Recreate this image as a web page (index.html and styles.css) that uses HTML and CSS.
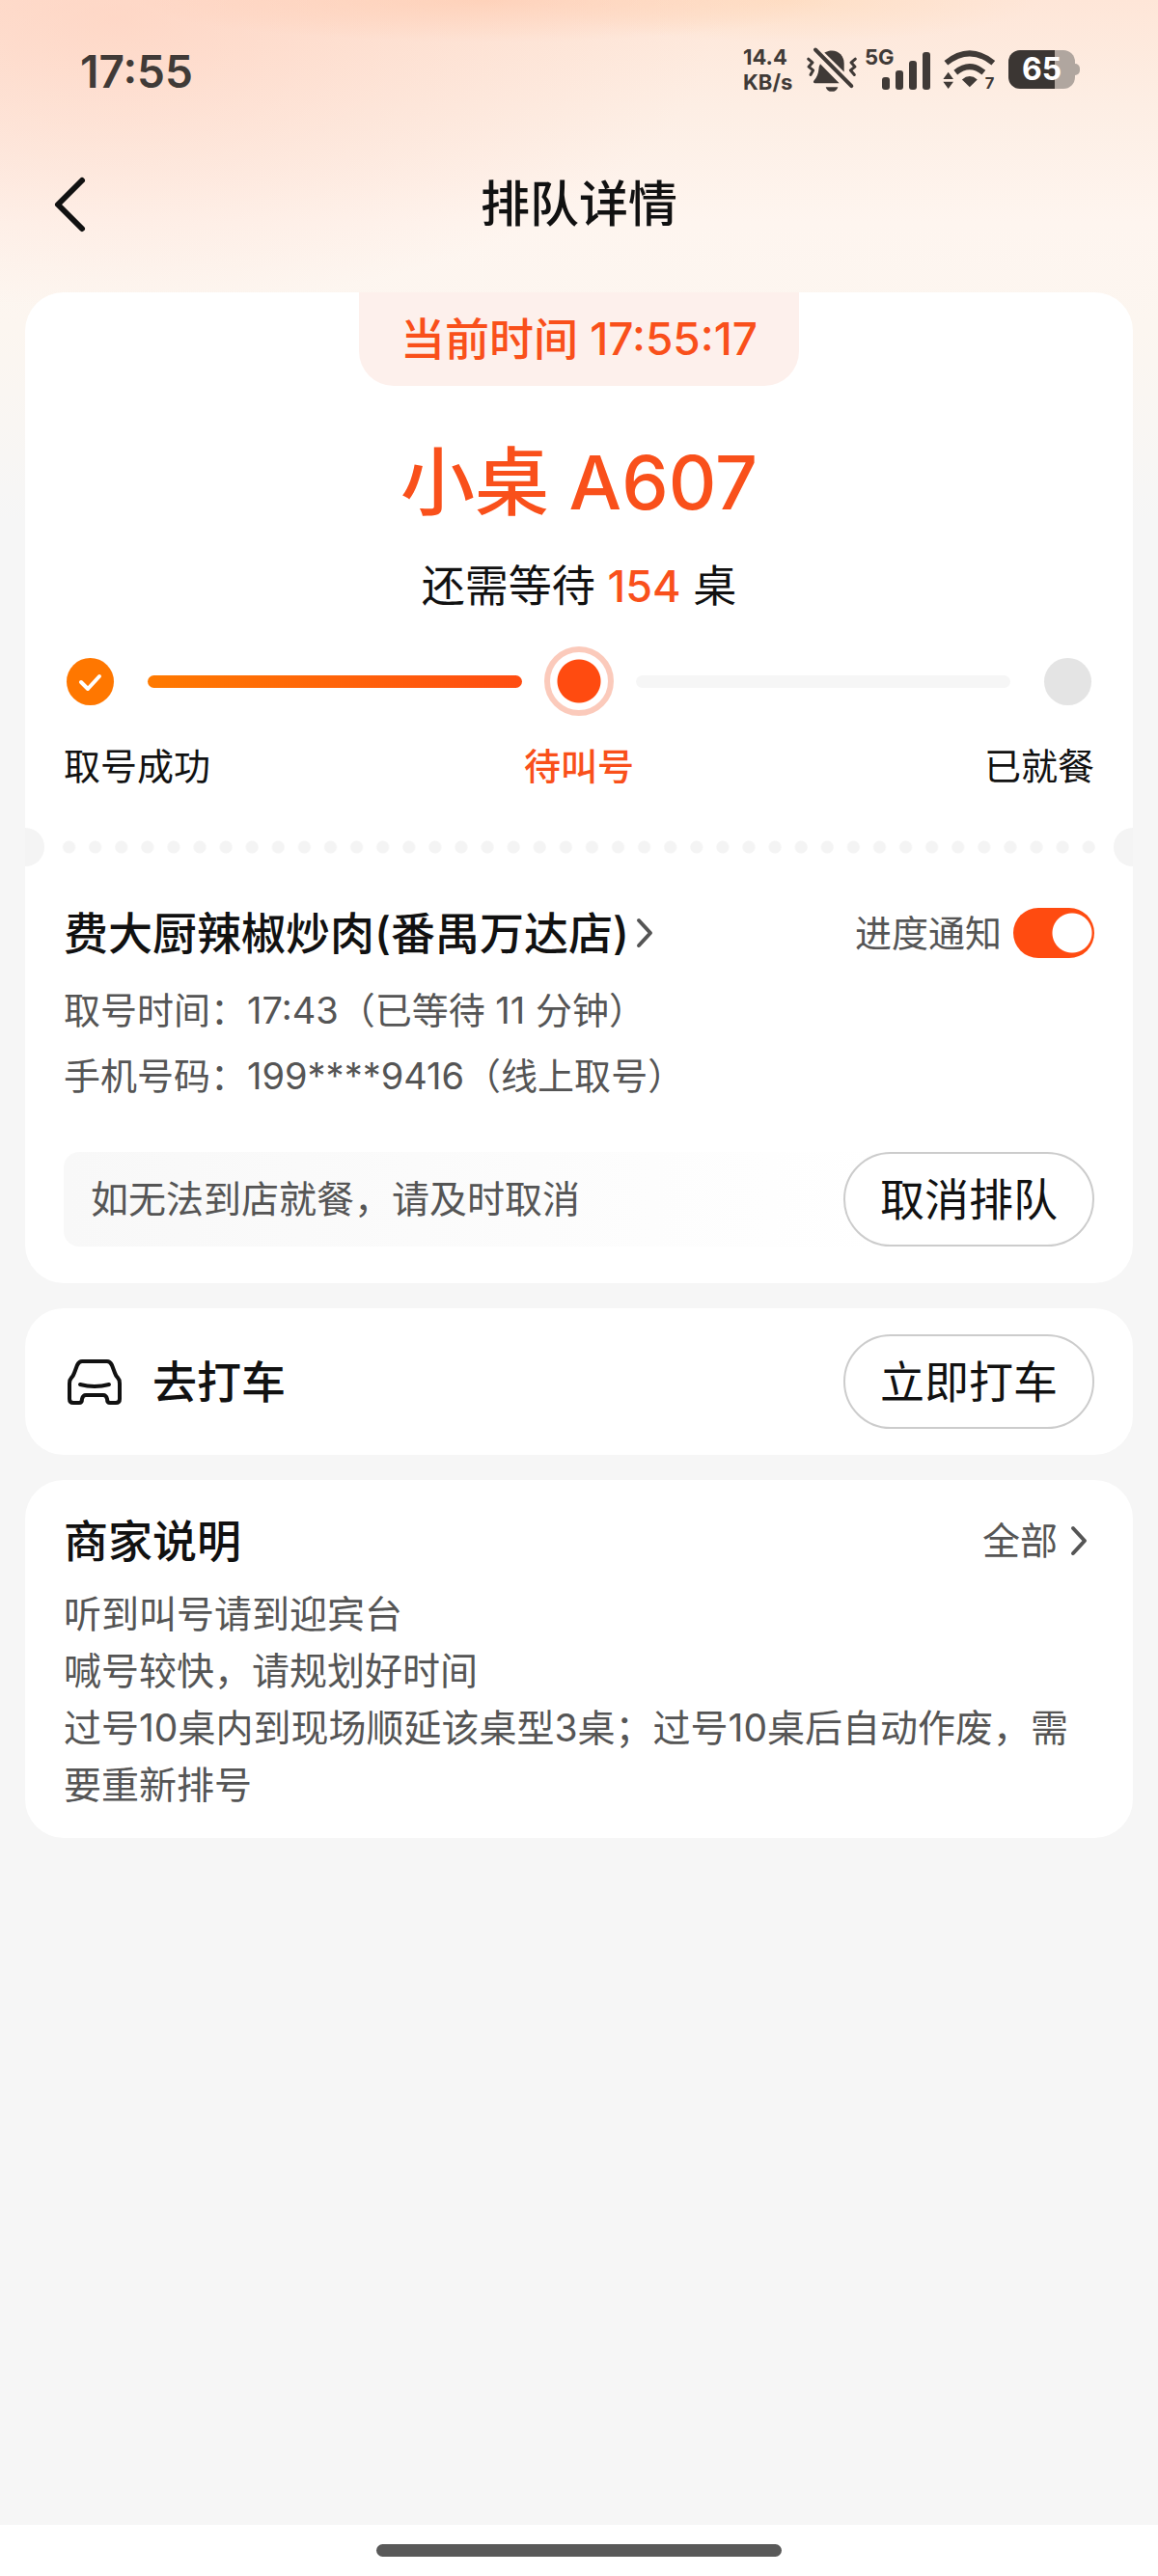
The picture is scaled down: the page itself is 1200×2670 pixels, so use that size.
FILE: index.html
```html
<!DOCTYPE html>
<html lang="zh-CN">
<head>
<meta charset="utf-8">
<meta name="viewport" content="width=device-width, initial-scale=1">
<title>排队详情</title>
<link rel="stylesheet" href="styles.css">
</head>
<body>
<div class="status-bar">
  <time class="clock">17:55</time>
  <div class="status-icons">
    <div class="net-speed"><span>14.4</span><span>KB/s</span></div>
    <svg class="icon-mute" viewBox="285 83 156 140" aria-hidden="true">
      <path class="solid" d="M340 99C372 82 401 102 401 132V159Z"/>
      <path class="solid" d="M327 134L386 194H310Q303 193 307 187Q321 170 322 152Q322 142 327 134Z"/>
      <path class="solid" d="M344 206H382Q378 220 363 220Q348 220 344 206Z"/>
      <path class="line slash" d="M312 90L424 203"/>
      <path class="line buzz" d="M290 119L303 130L291 143L305 154L297 168M436 119L423 130L435 143L421 154L433 168"/>
    </svg>
    <div class="cellular">
      <span class="cell-type">5G</span>
      <svg class="icon-bars" viewBox="0 0 50 40" aria-hidden="true">
        <rect x="0" y="26" width="8" height="13" rx="3"/>
        <rect x="14" y="19" width="8" height="20" rx="3"/>
        <rect x="28" y="9" width="8" height="30" rx="3"/>
        <rect x="42" y="0" width="8" height="39" rx="3"/>
      </svg>
    </div>
    <svg class="icon-wifi" viewBox="706 98 166 124" aria-hidden="true">
      <path class="line arc" d="M716 138Q790 78 864 138M746 168Q790 132 834 168"/>
      <path class="solid" d="M766 190Q790 170 814 190L790 214Z"/>
      <path class="solid" d="M723 167L739 189H707ZM723 219L739 197H707Z"/>
      <text x="838" y="218">7</text>
    </svg>
    <div class="battery">65</div>
  </div>
</div>

<header class="nav-bar">
  <button class="back" type="button" aria-label="返回">
    <svg viewBox="0 0 36 60" aria-hidden="true"><path d="M31 5L6 30L31 55"/></svg>
  </button>
  <h1 class="nav-title">排队详情</h1>
</header>

<main class="content">
  <section class="card ticket">
    <p class="now">当前时间 17:55:17</p>
    <h2 class="ticket-no">小桌 A607</h2>
    <p class="waiting">还需等待 <strong>154</strong> 桌</p>

    <div class="track" aria-hidden="true">
      <span class="dot dot-done"><svg viewBox="0 0 49 49"><path d="M15 25L22 32L34 19"/></svg></span>
      <span class="bar bar-done"></span>
      <span class="ring"></span>
      <span class="bar"></span>
      <span class="dot"></span>
    </div>
    <ol class="steps">
      <li>取号成功</li>
      <li class="current" aria-current="step">待叫号</li>
      <li>已就餐</li>
    </ol>

    <div class="tear"></div>

    <div class="row store">
      <a class="store-link" href="#store">费大厨辣椒炒肉(番禺万达店)<svg class="chevron" viewBox="0 0 20 32" aria-hidden="true"><path d="M4 3L16 16L4 29"/></svg></a>
      <label class="notify">进度通知<input class="switch" type="checkbox" role="switch" checked></label>
    </div>
    <div class="details">
      <p>取号时间：17:43（已等待 11 分钟）</p>
      <p>手机号码：199****9416（线上取号）</p>
    </div>
    <div class="row cancel">
      <p class="tip">如无法到店就餐，请及时取消</p>
      <button class="pill" type="button">取消排队</button>
    </div>
  </section>

  <section class="card row taxi">
    <svg class="icon-car" viewBox="0 0 56 48" aria-hidden="true">
      <path d="M15 3H41Q44 3 46 7L49 15Q50 18 52 20Q54 22 54 26V42Q54 46 50 46H44Q41 46 41 42Q40 38 37 38H19Q16 38 15 42Q15 46 12 46H6Q2 46 2 42V26Q2 22 4 20Q6 18 7 15L10 7Q12 3 15 3Z"/>
      <path d="M13 27Q28 31 43 27"/>
    </svg>
    <h2 class="card-title taxi-title">去打车</h2>
    <button class="pill" type="button">立即打车</button>
  </section>

  <section class="card notice">
    <div class="row">
      <h2 class="card-title">商家说明</h2>
      <a class="all-link" href="#all">全部<svg class="chevron" viewBox="0 0 20 32" aria-hidden="true"><path d="M4 3L16 16L4 29"/></svg></a>
    </div>
    <div class="notice-text">
      <p>听到叫号请到迎宾台</p>
      <p>喊号较快，请规划好时间</p>
      <p>过号10桌内到现场顺延该桌型3桌；过号10桌后自动作废，需要重新排号</p>
    </div>
  </section>
</main>

<footer class="gesture-bar"><span class="handle"></span></footer>
</body>
</html>
```

FILE: styles.css
```css
:root {
  --ink: #111;
  --muted: #555;
  --status: #403a37;
  --accent: #f9501b;
  --page: #f6f6f6;
  --text-xs: 38px;
  --text-s: 39px;
  --text-m: 46px;
}

* {
  box-sizing: border-box;
}

body {
  margin: 0;
  min-height: 100vh;
  display: flex;
  flex-direction: column;
  color: var(--ink);
  font-family: Inter, "Noto Sans CJK SC", sans-serif;
  font-size: var(--text-s);
  line-height: 60px;
  background:
    radial-gradient(ellipse 360px 44px at 42% 0, rgba(255, 196, 164, .5), transparent),
    radial-gradient(ellipse 260px 44px at 68% 0, rgba(255, 216, 180, .5), transparent),
    radial-gradient(ellipse 620px 300px at 10% 20px, rgba(255, 200, 180, .5), transparent),
    linear-gradient(#fee6d8 0, #fdeee4 110px, #fef5ef 230px, #fcf6f0 340px, #f6f6f6 540px) var(--page);
}

h1, h2, p, ol {
  margin: 0;
  padding: 0;
  font-weight: 400;
}

a {
  color: inherit;
  text-decoration: none;
}

button {
  padding: 0;
  color: inherit;
  font: inherit;
}

/* Status bar */

.status-bar {
  height: 148px;
  padding: 0 86px 0 83px;
  display: flex;
  align-items: center;
  justify-content: space-between;
  color: var(--status);
}

.clock {
  font-size: 46px;
  font-weight: 600;
}

.status-icons {
  padding-bottom: 4px;
  display: flex;
  align-items: center;
}

.net-speed {
  width: 66px;
  display: flex;
  flex-direction: column;
  font-size: 22px;
  font-weight: 700;
  line-height: 26px;
}

.status-icons svg {
  display: block;
  overflow: visible;
  fill: var(--status);
}

.status-icons .line {
  fill: none;
  stroke: var(--status);
  stroke-linecap: round;
  stroke-linejoin: round;
}

.icon-mute {
  width: 52px;
  height: 47px;
}

.status-icons .slash {
  stroke-width: 12;
}

.status-icons .buzz {
  stroke-width: 9;
}

.cellular {
  position: relative;
  width: 68px;
  height: 44px;
  margin-left: 8px;
  display: flex;
  align-items: flex-end;
  justify-content: flex-end;
}

.cell-type {
  position: absolute;
  top: 0;
  left: 0;
  font-size: 22px;
  font-weight: 700;
  line-height: 18px;
}

.icon-bars {
  width: 50px;
  height: 40px;
}

.icon-wifi {
  width: 55px;
  height: 41px;
  margin-left: 13px;
}

.status-icons .arc {
  stroke-width: 18;
  stroke-linecap: butt;
}

.icon-wifi text {
  font-size: 50px;
  font-weight: 700;
}

.battery {
  position: relative;
  width: 69px;
  height: 40px;
  margin-left: 13px;
  border-radius: 12px;
  background: linear-gradient(90deg, #3b3633 70%, #b0a69f 70%);
  color: #fff;
  font-size: 32px;
  font-weight: 700;
  line-height: 40px;
  text-align: center;
}

.battery::after {
  content: "";
  position: absolute;
  left: 100%;
  top: 14px;
  width: 5px;
  height: 12px;
  border-radius: 0 5px 5px 0;
  background: #b0a69f;
}

/* Navigation bar */

.nav-bar {
  height: 128px;
  padding: 0 54px;
  display: grid;
  grid-template-columns: 1fr auto 1fr;
  align-items: center;
}

.back {
  width: 36px;
  height: 60px;
  border: 0;
  background: none;
}

.back svg {
  display: block;
  fill: none;
  stroke: var(--ink);
  stroke-width: 6;
  stroke-linecap: round;
  stroke-linejoin: round;
}

.nav-title {
  font-size: 51px;
  font-weight: 500;
}

/* Cards */

.content {
  flex: 1;
  padding: 27px 26px;
  display: flex;
  flex-direction: column;
  gap: 26px;
}

.card {
  padding: 0 40px;
  border-radius: 40px;
  background: #fff;
}

.row {
  display: flex;
  align-items: center;
  justify-content: space-between;
}

.card-title {
  font-size: var(--text-m);
  font-weight: 500;
}

.pill {
  width: 260px;
  height: 98px;
  flex: none;
  border: 2px solid #ccc;
  border-radius: 49px;
  background: #fff;
  font-size: var(--text-m);
}

.chevron {
  width: 20px;
  height: 32px;
  fill: none;
  stroke: var(--muted);
  stroke-width: 4;
  stroke-linecap: round;
  stroke-linejoin: round;
}

/* Queue ticket */

.ticket {
  padding-bottom: 38px;
}

.now {
  width: 456px;
  margin: 0 auto;
  border-radius: 0 0 36px 36px;
  background: #fdf0ec;
  color: var(--accent);
  font-size: var(--text-m);
  font-weight: 500;
  line-height: 97px;
  text-align: center;
}

.ticket-no {
  margin-top: 50px;
  color: var(--accent);
  font-size: 77px;
  font-weight: 500;
  line-height: 100px;
  text-align: center;
}

.waiting {
  margin-top: 28px;
  font-size: 45px;
  text-align: center;
}

.waiting strong {
  color: var(--accent);
  font-weight: 500;
}

.track {
  margin-top: 32px;
  padding: 0 3px;
  display: flex;
  align-items: center;
}

.dot {
  width: 49px;
  height: 49px;
  border-radius: 50%;
  background: #e4e4e4;
}

.dot-done {
  background: #ff7700;
}

.dot-done svg {
  display: block;
  fill: none;
  stroke: #fff;
  stroke-width: 4;
  stroke-linecap: round;
  stroke-linejoin: round;
}

.bar {
  flex: 1;
  height: 13px;
  margin: 0 35px 0 23px;
  border-radius: 7px;
  background: #f6f6f6;
}

.bar-done {
  margin: 0 23px 0 35px;
  background: linear-gradient(90deg, #ff7a00, #ff4d12);
}

.ring {
  width: 72px;
  height: 72px;
  border: 6px solid #fbcabb;
  border-radius: 50%;
  background: radial-gradient(circle, #ff4b10 22px, #fff 23px);
}

.steps {
  margin-top: 24px;
  display: grid;
  grid-template-columns: 1fr auto 1fr;
  font-size: var(--text-xs);
  line-height: 56px;
  list-style: none;
}

.steps li:last-child {
  text-align: right;
}

.steps .current {
  color: var(--accent);
  font-weight: 500;
}

.tear {
  position: relative;
  height: 40px;
  margin: 36px -40px 0;
  padding: 0 32px;
  overflow: hidden;
  background: radial-gradient(circle, #f4f4f4 6px, transparent 7px) 0 0 / 27px 40px round content-box content-box;
}

.tear::before,
.tear::after {
  content: "";
  position: absolute;
  top: 0;
  width: 40px;
  height: 40px;
  border-radius: 50%;
  background: #f4f4f4;
}

.tear::before {
  left: -20px;
}

.tear::after {
  right: -20px;
}

.store {
  margin-top: 39px;
}

.store-link {
  display: flex;
  align-items: center;
  gap: 6px;
  font-size: var(--text-m);
  font-weight: 500;
}

.notify {
  display: flex;
  align-items: center;
  gap: 12px;
  color: var(--muted);
  font-size: var(--text-xs);
}

.switch {
  appearance: none;
  width: 84px;
  height: 52px;
  margin: 0;
  border-radius: 26px;
  background: radial-gradient(circle at 61px 50%, #fff 20px, #ff4b10 21px);
}

.details {
  margin-top: 16px;
  color: var(--muted);
  font-size: var(--text-xs);
  line-height: 68px;
}

.cancel {
  margin-top: 45px;
  border-radius: 16px;
  background: linear-gradient(90deg, #f8f8f8, #fff 80%);
}

.tip {
  padding-left: 28px;
  color: var(--muted);
}

/* Taxi */

.taxi {
  padding-top: 27px;
  padding-bottom: 27px;
}

.icon-car {
  width: 56px;
  height: 48px;
  margin: 0 32px 0 4px;
  fill: none;
  stroke: var(--ink);
  stroke-width: 4;
  stroke-linecap: round;
  stroke-linejoin: round;
}

.taxi-title {
  flex: 1;
}

/* Merchant notice */

.notice {
  padding-top: 33px;
  padding-bottom: 26px;
}

.all-link {
  padding-right: 6px;
  display: flex;
  align-items: center;
  gap: 12px;
  color: var(--muted);
}

.notice-text {
  margin-top: 16px;
  color: var(--muted);
  line-height: 59px;
}

/* Home gesture area */

.gesture-bar {
  height: 53px;
  padding-top: 20px;
  display: flex;
  justify-content: center;
  background: #fff;
}

.handle {
  width: 35%;
  height: 13px;
  border-radius: 7px;
  background: #595959;
}
```
